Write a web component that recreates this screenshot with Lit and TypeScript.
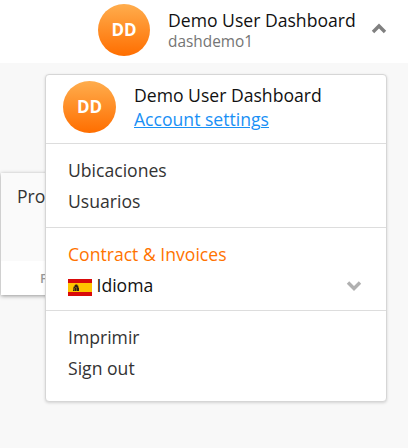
import { LitElement, html, css } from "lit";
import { customElement } from "lit/decorators.js";

@customElement("app-root")
export class AppRoot extends LitElement {
  static styles = css`
    :host { display: block; position: relative; height: 448px; overflow: hidden; background: #f8f8f8; color: #111; font: 17.6px/24px "Open Sans", sans-serif; }
    * { box-sizing: border-box; }
    header { height: 63px; background: #fff; display: flex; align-items: flex-start; padding: 4px 21px 0 98px; }
    .avatar { width: 52px; height: 52px; border-radius: 50%; flex: none; background: linear-gradient(#ffad4d, #ff6e00); color: #fff; font-weight: 700; font-size: 17px; display: grid; place-items: center; }
    .who { margin-left: 18px; padding-top: 4px; white-space: nowrap; }
    .sub { font-size: 15.4px; line-height: 20px; color: #757575; }
    .up { margin: 19px 0 0 auto; }
    .card { position: absolute; left: 1px; top: 173px; width: 200px; height: 122px; background: #fafafa; box-shadow: 0 1px 4px #0006; }
    .card-title { padding: 11px 16px; height: 88px; color: #333; }
    .card-foot { background: #fff; height: 34px; padding: 5px 39px; font-size: 13px; font-weight: 600; color: #999; }
    .menu { position: absolute; left: 45px; top: 74px; width: 342px; height: 328px; background: #fff; border: 1px solid #d6d6d6; border-radius: 4px; box-shadow: 0 1px 3px #00000026; }
    .profile { height: 68px; padding: 6px 17px; display: flex; }
    .profile .avatar { width: 53px; }
    .profile .who { padding-top: 2px; }
    a { display: block; color: #1a90f5; text-decoration: underline; text-underline-offset: 1px; text-decoration-thickness: 1px; }
    .group { border-top: 1px solid #ddd; padding: 11px 22px 10px; color: #333; }
    .group.account { padding-bottom: 9px; }
    .row { height: 31px; line-height: 31px; display: flex; align-items: center; }
    .orange { color: #ff7300; }
    .lang { color: #111; }
    .flag { margin: 3px 4.5px 0 0; }
    .down { margin: 0 2px 0 auto; }
  `;
  render() {
    return html`
      <header><div class="avatar">DD</div><div class="who"><div>Demo User Dashboard</div><div class="sub">dashdemo1</div></div>
      <svg class="up" width="16" height="12" viewBox="0 0 16 12" fill="none" stroke="#808080" stroke-width="3.4"><path d="M2 9l6-6 6 6"/></svg></header>
      <section class="card"><div class="card-title">Pro</div><div class="card-foot">F</div></section>
      <nav class="menu">
        <div class="profile"><div class="avatar">DD</div><div class="who"><div>Demo User Dashboard</div><a>Account settings</a></div></div>
        <div class="group"><div class="row">Ubicaciones</div><div class="row">Usuarios</div></div>
        <div class="group account"><div class="row orange">Contract &amp; Invoices</div><div class="row lang">
        <svg class="flag" width="24" height="17" viewBox="0 0 24 17"><path fill="#d90a0a" d="M0 0h24v17H0z"/><path fill="#ffc400" d="M0 4h24v9H0z"/><path fill="#735510" d="M5 12V9l1-2 2-2 2 1 1 3v3z"/><path fill="#2b2116" d="M7 6h2v1h1v2H9V8H7zM6 8h1v1H6zM7 9h1v3H7zM9 9h2v3H9zM5 11h1v1H5z"/></svg>Idioma
        <svg class="down" width="16" height="12" viewBox="0 0 16 12" fill="none" stroke="#b0b0b0" stroke-width="3.4"><path d="M2 2.500l6 6 6-6"/></svg></div></div>
        <div class="group"><div class="row">Imprimir</div><div class="row">Sign out</div></div>
      </nav>`;
  }
}
